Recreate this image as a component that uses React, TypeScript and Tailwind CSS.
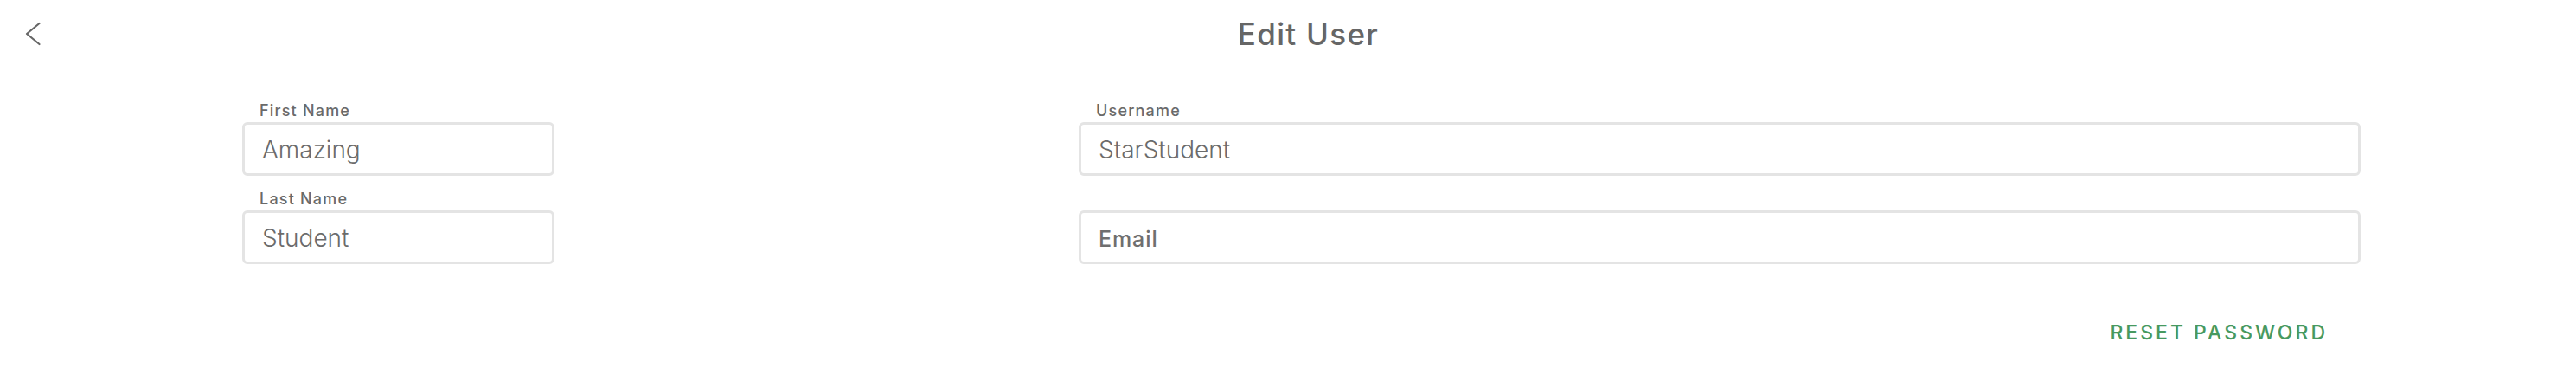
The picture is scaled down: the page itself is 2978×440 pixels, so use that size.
type Field = {
  label?: string;
  value?: string;
  placeholder?: string;
};

const leftFields: Field[] = [
  { label: "First Name", value: "Amazing" },
  { label: "Last Name", value: "Student" },
];

const rightFields: Field[] = [
  { label: "Username", value: "StarStudent" },
  { placeholder: "Email" },
];

export default function App() {
  return (
    <div className="min-h-[440px] w-full bg-white font-['Inter','Liberation_Sans',sans-serif] text-[#666666]">
      <header className="flex h-[79px] items-center border-b border-[#f6f6f6] pl-[29px]">
        <button className="flex h-[28px] w-[18px] items-center justify-center text-[#666666]">
          <svg
            width="18"
            height="28"
            viewBox="0 0 18 28"
            fill="none"
            stroke="currentColor"
            strokeWidth="2.2"
            strokeLinecap="round"
            strokeLinejoin="round"
          >
            <polyline points="16.5,2 2,14 16.5,26" />
          </svg>
        </button>
        <h1 className="flex-1 text-center text-[35px] font-medium leading-[40px] tracking-[1.3px] text-[#666666]">
          Edit User
        </h1>
      </header>

      <main className="pl-[280px] pt-[38px]">
        <div className="flex gap-[606px]">
          <FieldColumn fields={leftFields} className="w-[361px]" />
          <FieldColumn fields={rightFields} className="w-[1482px]" />
        </div>
        <div className="flex w-[2449px] justify-end pr-[38px] pt-[67px]">
          <button className="text-[23px] font-medium uppercase leading-[24px] tracking-[3px] text-[#47995f]">
            Reset Password
          </button>
        </div>
      </main>
    </div>
  );
}

function FieldColumn({
  fields,
  className,
}: {
  fields: Field[];
  className: string;
}) {
  return (
    <div className={`flex flex-col gap-[16px] ${className}`}>
      {fields.map((f, i) => (
        <label key={i} className="flex flex-col">
          <span className="mb-[4px] h-[20px] pl-[20px] pt-[1px] text-[18px] font-medium leading-[20px] tracking-[1.2px] text-[#6a6a6a]">
            {f.label ?? ""}
          </span>
          <input
            readOnly
            defaultValue={f.value}
            placeholder={f.placeholder}
            className="h-[62px] w-full rounded-[6px] border-[3px] border-[#e4e4e4] bg-white pl-[20px] pt-[1px] text-[28px] font-light text-[#6b6b6b] outline-none placeholder:text-[25px] placeholder:font-medium placeholder:tracking-[0.9px] placeholder:text-[#6f6f6f]"
          />
        </label>
      ))}
    </div>
  );
}
